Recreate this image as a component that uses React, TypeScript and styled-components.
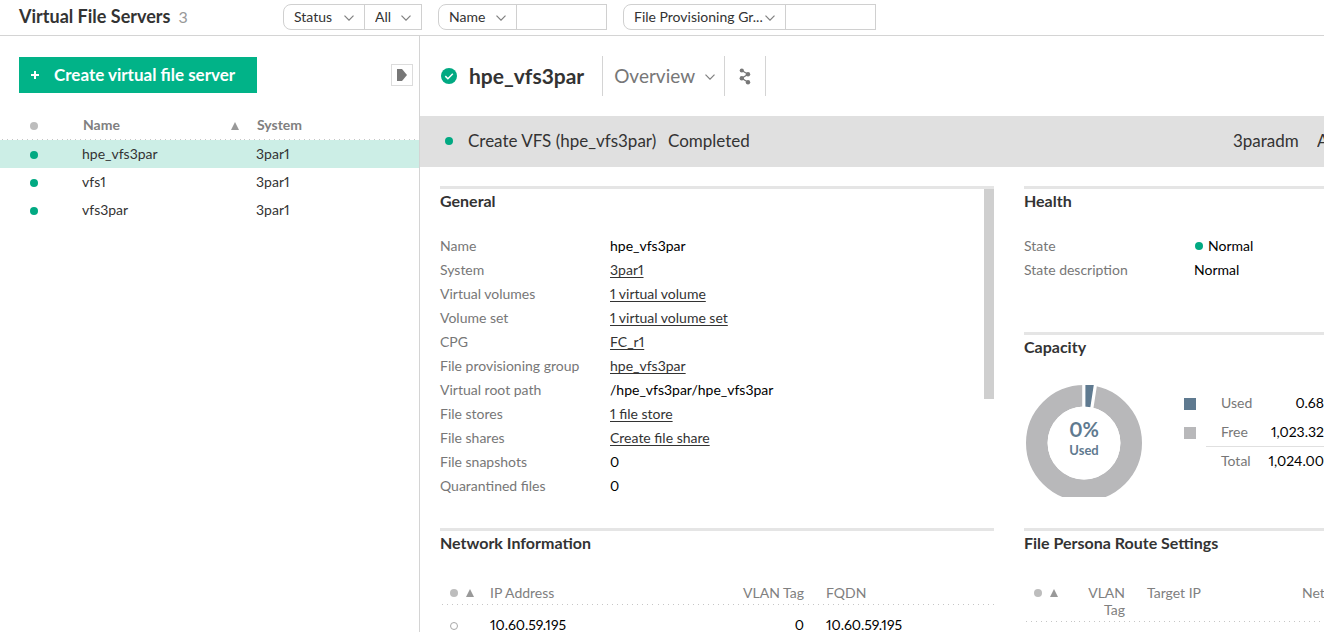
import React from "react";
import styled, { createGlobalStyle, css } from "styled-components";

const GlobalStyle = createGlobalStyle`
  *, *::before, *::after { box-sizing: border-box; }
  body {
    margin: 0;
    background: #fff;
    color: #333;
    font: 14px/24px Lato, "Open Sans", sans-serif;
    font-variant-numeric: proportional-nums;
  }
  h1, h2, p, dl, dd { margin: 0; }
  button, select, input { font: inherit; color: inherit; }
  table { border-collapse: collapse; border-spacing: 0; table-layout: fixed; }
`;

const Page = styled.div`
  display: flex;
  flex-direction: column;
  height: 100vh;
  overflow: hidden;
`;

const TopBar = styled.header`
  display: flex;
  flex: none;
  height: 36px;
  padding-top: 4px;
  border-bottom: 1px solid #d4d4d4;
`;

const PageTitle = styled.h1`
  flex: none;
  width: 283px;
  padding-left: 19px;
  font-size: 18px;
  line-height: 24px;
  font-weight: 700;
`;

const Count = styled.span`
  margin-left: 8px;
  font-size: 16px;
  font-weight: 400;
  color: #999;
`;

const FilterGroup = styled.div`
  display: flex;
  flex: none;
  height: 26px;
  margin-right: 16px;
`;

const SelectBox = styled.span<{ $width: number; $first?: boolean }>`
  position: relative;
  width: ${(p) => p.$width}px;
  height: 26px;
  border: 1px solid #d0d0d0;
  border-radius: ${(p) => (p.$first ? "8px 0 0 8px" : "0")};
  & + & { margin-left: -1px; }
`;

const FilterSelect = styled.select`
  display: block;
  width: 100%;
  height: 24px;
  padding: 0 0 0 10px;
  border: 0;
  background: transparent;
  appearance: none;
`;

const ChevronIcon = styled.svg<{ $right: number }>`
  position: absolute;
  right: ${(p) => p.$right}px;
  top: 50%;
  width: 10px;
  height: 6px;
  margin-top: -2px;
  fill: none;
  stroke: #808080;
  stroke-width: 1.2;
  pointer-events: none;
`;

const FilterInput = styled.input`
  width: 91px;
  height: 26px;
  margin-left: -1px;
  padding: 0 8px;
  border: 1px solid #d0d0d0;
  border-radius: 0;
`;

const Body = styled.div`
  display: flex;
  flex: 1;
  min-height: 0;
`;

const Master = styled.aside`
  flex: none;
  width: 420px;
  padding-top: 21px;
  border-right: 1px solid #d4d4d4;
`;

const MasterTools = styled.div`
  display: flex;
  align-items: center;
  justify-content: space-between;
  padding: 0 6px 0 19px;
`;

const CreateButton = styled.button`
  display: flex;
  align-items: center;
  width: 238px;
  height: 36px;
  padding: 0 0 0 12px;
  gap: 15px;
  border: 0;
  background: #01b388;
  color: #fff;
  font-size: 17px;
  font-weight: 700;
  white-space: nowrap;
`;

const CollapseButton = styled.button`
  display: flex;
  align-items: center;
  justify-content: center;
  width: 22px;
  height: 22px;
  padding: 0;
  border: 1px solid #dcdcdc;
  background: #fff;
`;

const dottedLine = css`
  background: repeating-linear-gradient(to right, transparent 0 2px, #c6c6c6 2px 3px, transparent 3px 5px)
    left bottom / 100% 1px no-repeat;
`;

const ServerTable = styled.table`
  width: 100%;
  margin-top: 19px;
  th {
    height: 28px;
    padding: 0 0 2px 15px;
    ${dottedLine}
    color: #808080;
    text-align: left;
    font-weight: 700;
  }
  td { height: 28px; padding: 0 0 0 14px; }
  th:first-child { padding: 0 0 2px 30px; }
  td:first-child { padding: 0 0 0 30px; }
`;

const ServerRow = styled.tr<{ $selected?: boolean }>`
  background: ${(p) => (p.$selected ? "#cceee6" : "transparent")};
`;

const HeadCell = styled.span`
  display: flex;
  align-items: baseline;
  justify-content: space-between;
  padding-right: 3px;
`;

const Dot = styled.span<{ $tone: "ok" | "idle" | "hollow" }>`
  display: inline-block;
  flex: none;
  width: 8px;
  height: 8px;
  border-radius: 50%;
  background: ${(p) => ({ ok: "#01a982", idle: "#bdbdbd", hollow: "#fff" })[p.$tone]};
  border: ${(p) => (p.$tone === "hollow" ? "1px solid #a8a8a8" : "0")};
`;

const SortArrow = styled.span`
  display: inline-block;
  border: 4px solid transparent;
  border-top: 0;
  border-bottom: 8px solid #999;
`;

const Detail = styled.main`
  flex: 1;
  min-width: 0;
  overflow: hidden;
`;

const DetailHead = styled.div`
  display: flex;
  align-items: center;
  height: 80px;
  padding-left: 21px;
`;

const DetailTitle = styled.h2`
  padding: 0 18px 0 12px;
  font-size: 21px;
  line-height: 28px;
  font-weight: 700;
`;

const ViewBox = styled.span`
  position: relative;
  width: 123px;
  height: 40px;
  border: solid #d4d4d4;
  border-width: 0 1px;
`;

const ViewSelect = styled.select`
  width: 100%;
  height: 40px;
  padding: 0 0 0 11px;
  border: 0;
  background: transparent;
  color: #777;
  font-size: 19px;
  appearance: none;
`;

const ShareButton = styled.button`
  display: flex;
  align-items: center;
  justify-content: center;
  width: 41px;
  height: 40px;
  padding: 0;
  border: 0;
  border-right: 1px solid #d4d4d4;
  background: transparent;
`;

const TaskBar = styled.div`
  display: flex;
  align-items: center;
  height: 51px;
  margin-left: -1px;
  padding: 0 0 2px 26px;
  background: #e0e0e0;
  font-size: 17px;
  white-space: nowrap;
`;

const TaskName = styled.span`
  width: 200px;
  margin-left: 15px;
`;

const TaskOwner = styled.span`
  width: 84px;
  margin-left: auto;
`;

const TaskTail = styled.span`
  width: 7px;
  overflow: hidden;
`;

const Panels = styled.div`
  display: grid;
  grid-template-columns: repeat(2, minmax(554px, 1fr));
  gap: 0 30px;
  padding: 19px 20px 0;
`;

const Panel = styled.section<{ $height?: number }>`
  min-height: ${(p) => p.$height ?? 0}px;
  border-top: 3px solid #e5e5e5;
`;

const PanelTitle = styled.h2`
  padding-bottom: 22px;
  font-size: 16px;
  line-height: 23px;
  font-weight: 700;
`;

const ScrollArea = styled.div`
  display: flex;
  justify-content: space-between;
`;

const ScrollThumb = styled.span`
  width: 10px;
  height: 210px;
  background: #cfcfcf;
`;

const Properties = styled.dl`
  display: grid;
  grid-template-columns: 170px auto;
  grid-auto-rows: 24px;
  dt { color: #777; }
  dd { color: #000; }
`;

const TextLink = styled.a`
  color: #333;
  text-decoration: underline;
  text-underline-offset: 2px;
`;

const State = styled.span`
  display: flex;
  align-items: center;
  gap: 5px;
  padding-left: 1px;
`;

const Capacity = styled.div`
  display: flex;
  padding-left: 2px;
`;

const Donut = styled.svg`
  flex: none;
  width: 116px;
  height: 112px;
  margin-top: 5px;
  text { text-anchor: middle; font-weight: 700; fill: #5f7a90; }
`;

const Legend = styled.table`
  width: 140px;
  height: 87px;
  margin: 9px 0 0 42px;
  th { padding: 0 0 2px; text-align: left; font-weight: 400; color: #777; }
  th:nth-child(2) { padding-left: 15px; }
  td { padding: 0; height: 29px; color: #000; }
  td:last-child { padding-bottom: 2px; text-align: right; }
  tr:last-child > *:not(:first-child) { box-shadow: 0 -1px #e0e0e0; }
`;

const Swatch = styled.span<{ $color: string }>`
  display: block;
  width: 12px;
  height: 12px;
  background: ${(p) => p.$color};
`;

const DataTable = styled.table`
  width: 100%;
  th {
    padding: 8px 0 4px;
    ${dottedLine}
    color: #808080;
    line-height: 17px;
    font-weight: 400;
    text-align: left;
    vertical-align: top;
  }
  td { height: 40px; padding: 0; color: #000; }
  th:first-child, td:first-child { padding-left: 10px; }
  th.number, td.number { text-align: right; padding-right: 22px; }
`;

const StatusHead = styled.span`
  display: flex;
  align-items: center;
  gap: 8px;
  height: 17px;
`;

const Chevron = ({ right }: { right: number }) => (
  <ChevronIcon $right={right} viewBox="0 0 10 6" aria-hidden="true">
    <path d="M0.500 0.700l4.500 4.500 4.500-4.500" />
  </ChevronIcon>
);

const Filter = ({ label, width, first, right }: { label: string; width: number; first?: boolean; right: number }) => (
  <SelectBox $width={width} $first={first}>
    <FilterSelect aria-label={label}>
      <option>{label}</option>
    </FilterSelect>
    <Chevron right={right} />
  </SelectBox>
);

const servers = ["hpe_vfs3par", "vfs1", "vfs3par"];

const properties: { label: string; value: string; link?: boolean }[] = [
  { label: "Name", value: "hpe_vfs3par" },
  { label: "System", value: "3par1", link: true },
  { label: "Virtual volumes", value: "1 virtual volume", link: true },
  { label: "Volume set", value: "1 virtual volume set", link: true },
  { label: "CPG", value: "FC_r1", link: true },
  { label: "File provisioning group", value: "hpe_vfs3par", link: true },
  { label: "Virtual root path", value: "/hpe_vfs3par/hpe_vfs3par" },
  { label: "File stores", value: "1 file store", link: true },
  { label: "File shares", value: "Create file share", link: true },
  { label: "File snapshots", value: "0" },
  { label: "Quarantined files", value: "0" },
];

export default function App() {
  return (
    <Page>
      <GlobalStyle />
      <TopBar>
        <PageTitle>
          Virtual File Servers<Count>3</Count>
        </PageTitle>
        <FilterGroup>
          <Filter label="Status" width={82} first right={10} />
          <Filter label="All" width={58} right={10} />
        </FilterGroup>
        <FilterGroup>
          <Filter label="Name" width={79} first right={10} />
          <FilterInput aria-label="Name filter" />
        </FilterGroup>
        <FilterGroup>
          <Filter label="File Provisioning Gr..." width={163} first right={10} />
          <FilterInput aria-label="File provisioning group filter" />
        </FilterGroup>
      </TopBar>
      <Body>
        <Master>
          <MasterTools>
            <CreateButton>
              <svg width="8" height="8" viewBox="0 0 8 8" aria-hidden="true">
                <path d="M4 0v8M0 4h8" stroke="#fff" strokeWidth="2" />
              </svg>
              Create virtual file server
            </CreateButton>
            <CollapseButton aria-label="Collapse list">
              <svg width="10" height="12" viewBox="0 0 10 12" aria-hidden="true">
                <path d="M0 0h5l5 6-5 6H0z" fill="#777" />
              </svg>
            </CollapseButton>
          </MasterTools>
          <ServerTable>
            <colgroup>
              <col width="68" />
              <col width="174" />
              <col />
            </colgroup>
            <thead>
              <tr>
                <th aria-label="Status"><Dot $tone="idle" /></th>
                <th><HeadCell>Name<SortArrow /></HeadCell></th>
                <th>System</th>
              </tr>
            </thead>
            <tbody>
              {servers.map((name, i) => (
                <ServerRow key={name} $selected={i === 0}>
                  <td><Dot $tone="ok" /></td>
                  <td>{name}</td>
                  <td>3par1</td>
                </ServerRow>
              ))}
            </tbody>
          </ServerTable>
        </Master>
        <Detail>
          <DetailHead>
            <svg width="16" height="16" viewBox="0 0 16 16" aria-hidden="true">
              <circle cx="8" cy="8" r="8" fill="#01a982" />
              <path d="M4.300 8.100l2.600 2.600 4.900-5" fill="none" stroke="#fff" strokeWidth="1.500" />
            </svg>
            <DetailTitle>hpe_vfs3par</DetailTitle>
            <ViewBox>
              <ViewSelect aria-label="View">
                <option>Overview</option>
              </ViewSelect>
              <Chevron right={9} />
            </ViewBox>
            <ShareButton aria-label="Map view">
              <svg width="12" height="17" viewBox="0 0 12 17" aria-hidden="true">
                <path d="M2.800 2.500L9 6.300l-6.200 4L9 14.300" fill="none" stroke="#777" strokeWidth="1.300" />
                <g fill="#777">
                  <circle cx="2.800" cy="2.500" r="2.100" />
                  <circle cx="9" cy="6.300" r="2.200" />
                  <circle cx="2.800" cy="10.300" r="2.200" />
                  <circle cx="9" cy="14.300" r="2.200" />
                </g>
              </svg>
            </ShareButton>
          </DetailHead>
          <TaskBar>
            <Dot $tone="ok" />
            <TaskName>Create VFS (hpe_vfs3par)</TaskName>
            <span>Completed</span>
            <TaskOwner>3paradm</TaskOwner>
            <TaskTail>A</TaskTail>
          </TaskBar>
          <Panels>
            <Panel $height={342}>
              <ScrollArea>
                <div>
                  <PanelTitle>General</PanelTitle>
                  <Properties>
                    {properties.map(({ label, value, link }) => (
                      <React.Fragment key={label}>
                        <dt>{label}</dt>
                        <dd>{link ? <TextLink href="#">{value}</TextLink> : value}</dd>
                      </React.Fragment>
                    ))}
                  </Properties>
                </div>
                <ScrollThumb />
              </ScrollArea>
            </Panel>
            <div>
              <Panel $height={146}>
                <PanelTitle>Health</PanelTitle>
                <Properties>
                  <dt>State</dt>
                  <dd><State><Dot $tone="ok" />Normal</State></dd>
                  <dt>State description</dt>
                  <dd>Normal</dd>
                </Properties>
              </Panel>
              <Panel>
                <PanelTitle>Capacity</PanelTitle>
                <Capacity>
                  <Donut viewBox="0 0 116 112" role="img" aria-label="0% used">
                    <circle cx="58" cy="58" r="47.200" fill="none" stroke="#b8b8ba" strokeWidth="21.600" />
                    <path d="M58 58V-2H69.500z" fill="#5f7a90" />
                    <path d="M57.800 38V-2M63.700 37L69.700 -2" stroke="#fff" strokeWidth="3.200" />
                    <circle cx="58" cy="58" r="36.400" fill="#fff" />
                    <text x="58" y="52" fontSize="20">0%</text>
                    <text x="58" y="70" fontSize="13">Used</text>
                  </Donut>
                  <Legend>
                    <colgroup>
                      <col width="22" />
                      <col width="50" />
                      <col />
                    </colgroup>
                    <tbody>
                      <tr>
                        <td><Swatch $color="#5f7a90" /></td>
                        <th scope="row">Used</th>
                        <td>0.68</td>
                      </tr>
                      <tr>
                        <td><Swatch $color="#b8b8ba" /></td>
                        <th scope="row">Free</th>
                        <td>1,023.32</td>
                      </tr>
                      <tr>
                        <td />
                        <th scope="row">Total</th>
                        <td>1,024.00</td>
                      </tr>
                    </tbody>
                  </Legend>
                </Capacity>
              </Panel>
            </div>
            <Panel>
              <PanelTitle>Network Information</PanelTitle>
              <DataTable>
                <colgroup>
                  <col width="50" />
                  <col width="166" />
                  <col width="170" />
                  <col />
                </colgroup>
                <thead>
                  <tr>
                    <th aria-label="Status"><StatusHead><Dot $tone="idle" /><SortArrow /></StatusHead></th>
                    <th>IP Address</th>
                    <th className="number">VLAN Tag</th>
                    <th>FQDN</th>
                  </tr>
                </thead>
                <tbody>
                  <tr>
                    <td><Dot $tone="hollow" /></td>
                    <td>10.60.59.195</td>
                    <td className="number">0</td>
                    <td>10.60.59.195</td>
                  </tr>
                </tbody>
              </DataTable>
            </Panel>
            <Panel>
              <PanelTitle>File Persona Route Settings</PanelTitle>
              <DataTable>
                <colgroup>
                  <col width="48" />
                  <col width="75" />
                  <col width="155" />
                  <col />
                </colgroup>
                <thead>
                  <tr>
                    <th aria-label="Status"><StatusHead><Dot $tone="idle" /><SortArrow /></StatusHead></th>
                    <th className="number">VLAN Tag</th>
                    <th>Target IP</th>
                    <th>Net</th>
                  </tr>
                </thead>
              </DataTable>
            </Panel>
          </Panels>
        </Detail>
      </Body>
    </Page>
  );
}
